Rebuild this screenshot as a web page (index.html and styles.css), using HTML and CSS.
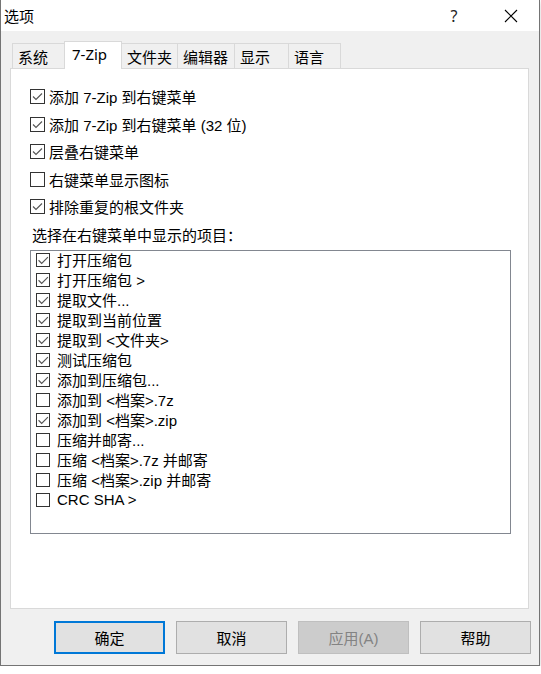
FILE: index.html
```html
<!DOCTYPE html>
<html lang="zh-CN">
<head>
    <meta charset="UTF-8">
    <title>选项</title>
    <link rel="stylesheet" href="styles.css">
</head>
<body>
    <div class="window">
        <div class="titlebar">
            <span class="title">选项</span>
            <span class="help">?</span>
            <span class="close">
                <svg width="14" height="14" viewBox="0 0 14 14"><path d="M1 1 L13 13 M13 1 L1 13" stroke="#000" stroke-width="1.1" fill="none"/></svg>
            </span>
        </div>

        <div class="body">
            <div class="tabs">
                <div class="tab tab-1">系统</div>
                <div class="tab tab-2 active">7-Zip</div>
                <div class="tab tab-3">文件夹</div>
                <div class="tab tab-4">编辑器</div>
                <div class="tab tab-5">显示</div>
                <div class="tab tab-6">语言</div>
            </div>

            <div class="panel">
                <div class="option"><span class="box checked"></span>添加 7-Zip 到右键菜单</div>
                <div class="option"><span class="box checked"></span>添加 7-Zip 到右键菜单 (32 位)</div>
                <div class="option"><span class="box checked"></span>层叠右键菜单</div>
                <div class="option"><span class="box"></span>右键菜单显示图标</div>
                <div class="option"><span class="box checked"></span>排除重复的根文件夹</div>

                <div class="label">选择在右键菜单中显示的项目：</div>

                <ul class="listbox">
                    <li><span class="box checked"></span>打开压缩包</li>
                    <li><span class="box checked"></span>打开压缩包 &gt;</li>
                    <li><span class="box checked"></span>提取文件...</li>
                    <li><span class="box checked"></span>提取到当前位置</li>
                    <li><span class="box checked"></span>提取到 &lt;文件夹&gt;</li>
                    <li><span class="box checked"></span>测试压缩包</li>
                    <li><span class="box checked"></span>添加到压缩包...</li>
                    <li><span class="box"></span>添加到 &lt;档案&gt;.7z</li>
                    <li><span class="box checked"></span>添加到 &lt;档案&gt;.zip</li>
                    <li><span class="box"></span>压缩并邮寄...</li>
                    <li><span class="box"></span>压缩 &lt;档案&gt;.7z 并邮寄</li>
                    <li><span class="box"></span>压缩 &lt;档案&gt;.zip 并邮寄</li>
                    <li><span class="box"></span>CRC SHA &gt;</li>
                </ul>
            </div>

            <div class="buttons">
                <button class="btn default">确定</button>
                <button class="btn">取消</button>
                <button class="btn" disabled>应用(A)</button>
                <button class="btn">帮助</button>
            </div>
        </div>
    </div>
</body>
</html>
```

FILE: styles.css
```css
body {
    margin: 0;
    padding: 0;
    background: #ffffff;
    font-family: "Liberation Sans", "Noto Sans CJK SC", sans-serif;
    font-size: 15px;
    color: #000;
}

.window {
    width: 540px;
    height: 666px;
    box-sizing: border-box;
    border: 1px solid #747474;
    border-top: none;
    background: #f0f0f0;
    box-shadow: 0 2px 6px rgba(0, 0, 0, 0.18);
}

.titlebar {
    height: 31px;
    background: #fff;
    display: flex;
    align-items: center;
}

.title {
    margin-left: 3px;
    flex: 1;
}

.help {
    width: 14px;
    text-align: center;
    color: #222;
    font-family: "Noto Sans", sans-serif;
    font-size: 16px;
    margin-right: 43px;
}

.close {
    display: flex;
    margin-right: 21px;
}

.tabs {
    display: flex;
    align-items: flex-end;
    height: 27px;
    margin-top: 10px;
    padding-left: 11px;
}

.tab {
    box-sizing: border-box;
    height: 25px;
    border: 1px solid #d9d9d9;
    border-bottom: none;
    margin-left: -1px;
    padding: 0 0 0 5px;
    display: flex;
    align-items: center;
    background: #f0f0f0;
}

.tab-1 { width: 53px; margin-left: 0; }
.tab-2 { width: 58px; }
.tab-3 { width: 57px; }
.tab-4 { width: 58px; }
.tab-5 { width: 55px; }
.tab-6 { width: 53px; }

.tab.active {
    height: 28px;
    margin-bottom: -1px;
    background: #fff;
    padding-left: 7px;
    padding-bottom: 3px;
    position: relative;
    z-index: 1;
    font-family: "Noto Sans", "Noto Sans CJK SC", sans-serif;
}

.panel {
    box-sizing: border-box;
    width: 519px;
    height: 541px;
    margin-left: 9px;
    border: 1px solid #d9d9d9;
    background: #fff;
    padding: 14px 0 0 19px;
}

.option {
    height: 27.5px;
    display: flex;
    align-items: center;
    gap: 4px;
}

.box {
    box-sizing: border-box;
    width: 15px;
    height: 15px;
    border: 1px solid #333;
    background: #fff;
    flex: none;
}

.box.checked {
    background: url("data:image/svg+xml,%3Csvg xmlns='http://www.w3.org/2000/svg' width='13' height='13'%3E%3Cpath d='M2 6.5 L5 9.5 L11 3.5' stroke='%23555' stroke-width='1.1' fill='none'/%3E%3C/svg%3E") center no-repeat #fff;
}

.label {
    height: 28px;
    display: flex;
    align-items: center;
    padding-left: 2px;
}

.listbox {
    list-style: none;
    margin: 1px 0 0;
    padding: 0 0 0 5px;
    box-sizing: border-box;
    width: 481px;
    height: 284px;
    border: 1px solid #828790;
}

.listbox li {
    height: 20px;
    display: flex;
    align-items: center;
    gap: 7px;
}

.listbox li:first-child {
    margin-top: -1px;
}

.listbox .box {
    width: 14px;
    height: 14px;
}

.buttons {
    display: flex;
    justify-content: flex-end;
    gap: 11px;
    margin-top: 12px;
    padding-right: 8px;
}

.btn {
    box-sizing: border-box;
    width: 111px;
    height: 33px;
    background: #e1e1e1;
    border: 1px solid #adadad;
    font-family: inherit;
    font-size: 15px;
    color: #000;
    padding: 0;
}

.btn.default {
    border: 2px solid #0078d7;
}

.btn:disabled {
    background: #cccccc;
    border-color: #bfbfbf;
    color: #838383;
}
```
